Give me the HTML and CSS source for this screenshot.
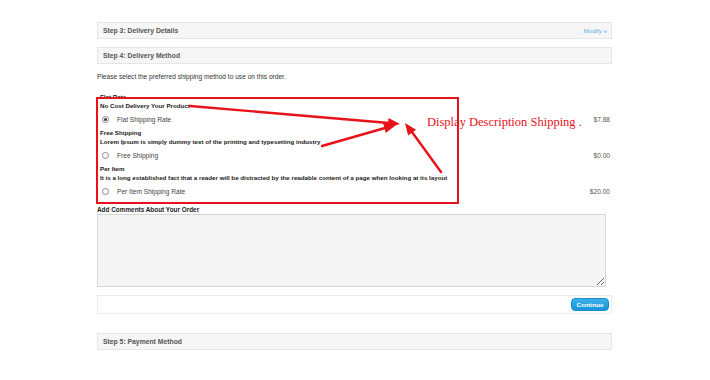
FILE: index.html
```html
<!DOCTYPE html>
<html lang="en">
<head>
    <meta charset="UTF-8">
    <meta name="viewport" content="width=device-width, initial-scale=1.0">
    <title>Checkout</title>
    <link rel="stylesheet" href="styles.css">
</head>
<body>
    <div id="checkout">
        <div class="step">
            <span>Step 3: Delivery Details</span>
            <a class="modify" href="#">Modify &raquo;</a>
        </div>
        <div class="step">
            <span>Step 4: Delivery Method</span>
        </div>

        <p class="intro">Please select the preferred shipping method to use on this order.</p>

        <div id="shipping">
            <div class="method">
                <div class="title">Flat Rate</div>
                <div class="title">No Cost Delivery Your Product</div>
                <label class="row">
                    <input type="radio" name="ship" checked>
                    <span class="name">Flat Shipping Rate</span>
                    <span class="price">$7.88</span>
                </label>
            </div>
            <div class="method">
                <div class="title">Free Shipping</div>
                <div class="title">Lorem Ipsum is simply dummy text of the printing and typesetting industry</div>
                <label class="row">
                    <input type="radio" name="ship">
                    <span class="name">Free Shipping</span>
                    <span class="price">$0.00</span>
                </label>
            </div>
            <div class="method">
                <div class="title">Per Item</div>
                <div class="title">It is a long established fact that a reader will be distracted by the readable content of a page when looking at its layout</div>
                <label class="row">
                    <input type="radio" name="ship">
                    <span class="name">Per Item Shipping Rate</span>
                    <span class="price">$20.00</span>
                </label>
            </div>
        </div>

        <div class="comments-label">Add Comments About Your Order</div>
        <textarea class="comments"></textarea>

        <div class="buttons">
            <button class="continue">Continue</button>
        </div>

        <div class="step last">
            <span>Step 5: Payment Method</span>
        </div>
    </div>

    <!-- annotation overlay -->
    <div class="highlight"></div>
    <div class="note">Display Description Shipping .</div>
    <svg class="arrows" width="710" height="380" viewBox="0 0 710 380">
        <g stroke="#e8121a" stroke-width="2.4" fill="none" stroke-linecap="round">
            <line x1="190" y1="106" x2="389" y2="123"/>
            <line x1="322" y1="146" x2="385" y2="128"/>
            <line x1="441" y1="172" x2="412" y2="132"/>
        </g>
        <g fill="#e8121a">
            <polygon points="400,124 387.6,128 388.5,118"/>
            <polygon points="396,125 385.8,133.1 383.1,123.5"/>
            <polygon points="405,123 416.1,129.7 408.1,135.6"/>
        </g>
    </svg>
</body>
</html>
```

FILE: styles.css
```css
body {
    margin: 0;
    background: #fff;
    font-family: "Liberation Sans", Arial, sans-serif;
    color: #222;
}

#checkout {
    width: 515px;
    padding: 22px 0 0 97px;
}

.step {
    box-sizing: border-box;
    height: 17px;
    border: 1px solid #e6e6e6;
    background: #f6f6f6;
    padding: 0 4px 0 5px;
    display: flex;
    justify-content: space-between;
    align-items: center;
    font-size: 6.8px;
    font-weight: bold;
    color: #555;
    margin-bottom: 8px;
}

.step.last {
    margin-top: 19px;
}

.modify {
    color: #5aaee0;
    font-weight: normal;
    font-size: 6.2px;
    text-decoration: none;
}

.intro {
    margin: 9px 0 12px 0;
    font-size: 6.6px;
    line-height: 8px;
    color: #333;
}

#shipping {
    padding: 0 2px 0 3px;
}

.method .title {
    font-size: 6.2px;
    font-weight: bold;
    line-height: 8.5px;
    color: #1a1a1a;
}

.row {
    display: flex;
    align-items: center;
    height: 19px;
    font-size: 6.6px;
    color: #444;
}

.row input {
    appearance: none;
    -webkit-appearance: none;
    box-sizing: border-box;
    width: 7px;
    height: 7px;
    margin: 0 8px 0 2px;
    border: 1px solid #888;
    border-radius: 50%;
    background: #fff;
    display: flex;
    align-items: center;
    justify-content: center;
}

.row input:checked::after {
    content: "";
    width: 3px;
    height: 3px;
    border-radius: 50%;
    background: #333;
}

.row .name {
    flex: 1;
}

.row .price {
    color: #555;
}

.comments-label {
    margin-top: 5px;
    font-size: 6.4px;
    font-weight: bold;
    line-height: 8px;
    color: #1a1a1a;
}

.comments {
    display: block;
    box-sizing: border-box;
    width: 509px;
    height: 73px;
    margin: 0;
    border: 1px solid #d6d6d6;
    background: #f5f5f5;
    resize: vertical;
}

.buttons {
    box-sizing: border-box;
    height: 19px;
    margin-top: 8px;
    border: 1px solid #ececec;
    background: #fff;
    display: flex;
    justify-content: flex-end;
    align-items: center;
    padding-right: 2px;
}

.continue {
    height: 13px;
    width: 38px;
    padding: 0;
    border: 1px solid #1a8fcc;
    border-radius: 4px;
    background: linear-gradient(#3cb0ea, #1796d6);
    color: #fff;
    font-family: "Liberation Sans", Arial, sans-serif;
    font-size: 6.2px;
    font-weight: bold;
}

.highlight {
    position: absolute;
    left: 96px;
    top: 97px;
    width: 363px;
    height: 107px;
    box-sizing: border-box;
    border: 2px solid #e8121a;
}

.note {
    position: absolute;
    left: 427px;
    top: 115px;
    font-family: "Liberation Serif", "Times New Roman", serif;
    font-size: 12.5px;
    color: #e8121a;
    white-space: nowrap;
}

.arrows {
    position: absolute;
    left: 0;
    top: 0;
    pointer-events: none;
}
```
